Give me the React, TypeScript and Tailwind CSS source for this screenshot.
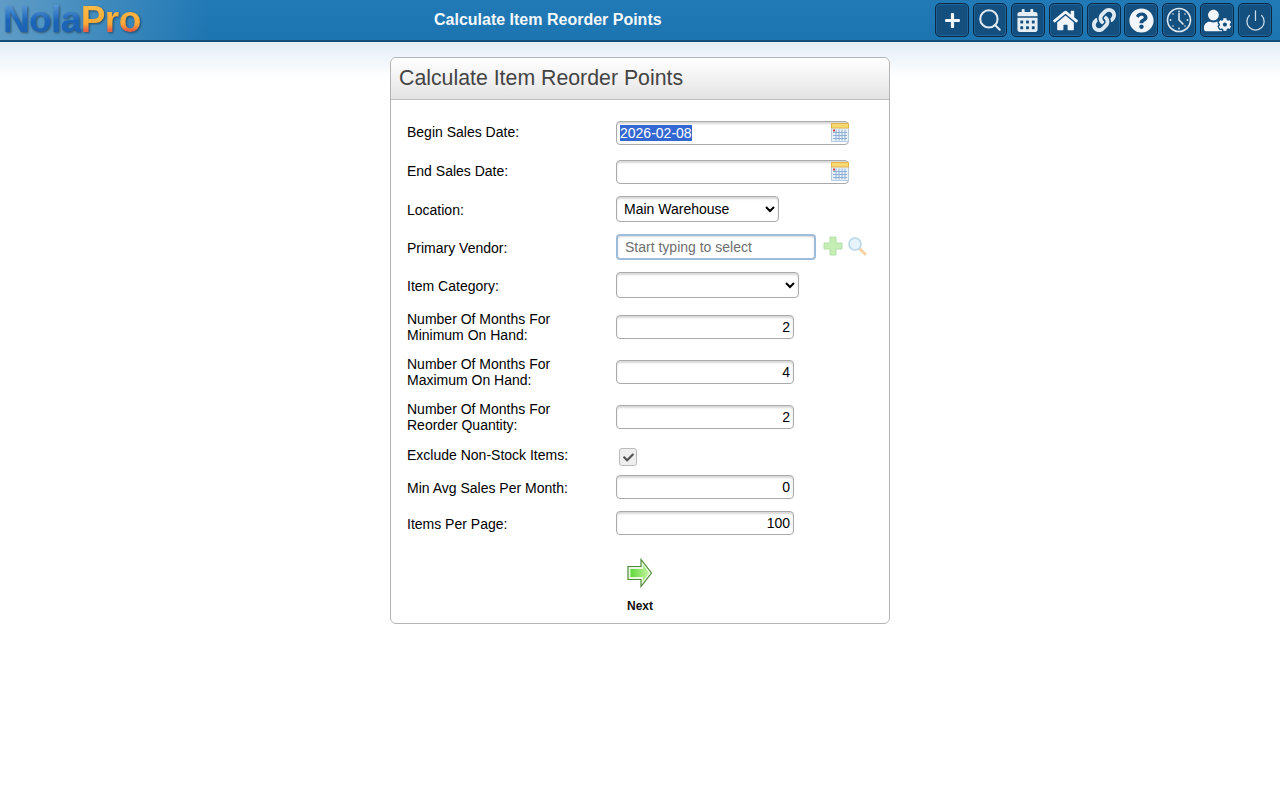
import { useEffect, useRef } from "react"
import { Power, Search } from "lucide-react"
import { FaCalendarAlt, FaCheck, FaHome, FaLink, FaPlus, FaQuestionCircle, FaUserCog } from "react-icons/fa"

function ClockIcon() {
  return (
    <svg width="26" height="26" viewBox="0 0 26 26" fill="none" stroke="#dfe9f2">
      <circle cx="13" cy="13" r="11.5" strokeWidth="1.6" />
      <path d="M13 6.5V13l4 4" strokeWidth="1.6" strokeLinecap="round" />
      <g stroke="none" fill="#dfe9f2">
        <circle cx="13" cy="4.5" r="0.9" />
        <circle cx="13" cy="21.5" r="0.9" />
        <circle cx="4.5" cy="13" r="0.9" />
        <circle cx="21.5" cy="13" r="0.9" />
        <circle cx="7" cy="7" r="0.8" />
        <circle cx="19" cy="7" r="0.8" />
        <circle cx="7" cy="19" r="0.8" />
        <circle cx="19" cy="19" r="0.8" />
      </g>
    </svg>
  )
}

function CalendarPicker() {
  return (
    <svg width="18" height="19" viewBox="0 0 18 19" className="absolute right-0 top-0.5">
      <rect x="0.5" y="0.5" width="17" height="18" fill="#e8f1fa" stroke="#b9cde2" />
      <rect x="0.5" y="0.5" width="17" height="4.5" fill="#f7d774" stroke="#dfb64a" />
      <rect x="2" y="6.5" width="2" height="2" fill="#d9434f" />
      <path d="M2 9.5h14M2 12.5h14M2 15.5h14M5 6.5v11M8 6.5v11M11 6.5v11M14 6.5v11" stroke="#8fb1d6" strokeWidth="1" />
    </svg>
  )
}

function NextArrow() {
  return (
    <svg width="26" height="30" viewBox="0 0 26 30">
      <defs>
        <linearGradient id="nextFill" x1="0" y1="0" x2="1" y2="0">
          <stop offset="0" stopColor="#5fd83a" />
          <stop offset="1" stopColor="#c4f59e" />
        </linearGradient>
      </defs>
      <path d="M1 8.5h13V1.5L24.5 15 14 28.5v-7H1z" fill="#eaf9df" stroke="#4f8a3a" strokeWidth="1.2" />
      <path d="M3.5 11h12.5V7l6 8-6 8v-4H3.5z" fill="url(#nextFill)" />
    </svg>
  )
}

const navButtons = [
  <FaPlus className="text-[17px] text-[#f2f6fa]" />,
  <Search size={26} strokeWidth={1.9} className="text-[#dfe9f2]" />,
  <FaCalendarAlt className="text-[23px] text-[#e6eef5]" />,
  <FaHome className="text-[25px] text-[#f2f6fa]" />,
  <FaLink className="text-[24px] text-[#dfe9f2]" />,
  <FaQuestionCircle className="text-[25px] text-[#f2f6fa]" />,
  <ClockIcon />,
  <FaUserCog className="text-[27px] text-[#f2f6fa]" />,
  <Power size={23} strokeWidth={1.3} className="text-[#cfdde9]" />,
]

const fieldClass =
  "h-6 rounded border border-[#aaaaaa] bg-white px-[3px] text-sm text-black shadow-[inset_0_2px_2px_#d8d8d8] outline-none"

function Row({
  label,
  height,
  labelClass = "",
  children,
}: {
  label: React.ReactNode
  height: string
  labelClass?: string
  children: React.ReactNode
}) {
  return (
    <div className={`flex items-center ${height}`}>
      <div className={`w-[225px] pl-4 text-sm leading-4 text-black ${labelClass}`}>{label}</div>
      <div className="relative flex items-center">{children}</div>
    </div>
  )
}

function NumberField({ value }: { value: string }) {
  return <input readOnly value={value} className={`${fieldClass} w-[178px] text-right`} />
}

export default function App() {
  const dateRef = useRef<HTMLInputElement>(null)

  useEffect(() => {
    dateRef.current?.focus()
    dateRef.current?.select()
  }, [])

  return (
    <div className="min-h-[800px] bg-white font-['Liberation_Sans',Arial,sans-serif]">
      <header className="flex h-[42px] items-start justify-between border-b-2 border-[#124d78] bg-gradient-to-b from-[#2179b6] to-[#1c74b0]">
        <div className="h-10 w-[210px] bg-gradient-to-r from-[#5f9cc6] via-[#3f8abd] to-transparent pl-[3px]">
          <div className="flex items-start text-[37px] leading-[40px] font-bold tracking-[-0.6px] drop-shadow-[1px_1px_1px_rgba(0,0,0,0.45)]">
            <span className="bg-gradient-to-b from-[#6aa8de] via-[#1b66bb] via-50% to-[#1c5fae] bg-clip-text text-transparent">Nola</span>
            <span className="bg-gradient-to-b from-[#ffc04a] via-[#f9a838] via-60% to-[#e8623f] to-75% bg-clip-text text-transparent">Pro</span>
          </div>
        </div>
        <div className="absolute left-[434px] top-0 flex h-10 w-[228px] items-center whitespace-nowrap text-base font-bold text-[#f4f8fb]">
          Calculate Item Reorder Points
        </div>
        <nav className="flex gap-[3.875px] pt-[3px] pr-2">
          {navButtons.map((icon, i) => (
            <div
              key={i}
              className="flex h-[34px] w-[34px] items-center justify-center rounded-[5px] border border-[#0b2a45] bg-[#14507f] shadow-[inset_0_0_0_1px_#1d6396]"
            >
              {icon}
            </div>
          ))}
        </nav>
      </header>

      <div className="bg-gradient-to-b from-[#e3eef7] to-white to-[36px] pt-[15px]">
        <main className="mx-auto h-[567px] w-[500px] rounded-[6px] border border-[#b4b4b4] bg-white">
          <h1 className="flex h-[42px] items-center rounded-t-[6px] border-b border-[#bdbdbd] bg-gradient-to-b from-white to-[#e4e4e4] pl-2 text-[21.3px] font-normal text-[#444444]">
            Calculate Item Reorder Points
          </h1>
          <div className="pt-[14px]">
            <Row label="Begin Sales Date:" height="h-[38px]" labelClass="pb-0.5">
              <input
                ref={dateRef}
                readOnly
                value="2026-02-08"
                className={`${fieldClass} w-[233px] selection:bg-[#3367d1] selection:text-white`}
              />
              <CalendarPicker />
            </Row>
            <Row label="End Sales Date:" height="h-[39px]" labelClass="pb-0.5">
              <input readOnly className={`${fieldClass} w-[233px]`} />
              <CalendarPicker />
            </Row>
            <Row label="Location:" height="h-[37px]">
              <select className={`${fieldClass} -mt-0.5 h-[26px] w-[163px]`}>
                <option>Main Warehouse</option>
              </select>
            </Row>
            <Row label="Primary Vendor:" height="h-[38px]" labelClass="pt-0.5">
              <input
                readOnly
                placeholder="Start typing to select"
                className="h-[26px] w-[200px] rounded border-2 border-[#9dbcd8] bg-white px-[7px] text-sm text-black shadow-[inset_0_1px_2px_#d8d8d8] outline-none placeholder:text-[#6f6f6f]"
              />
              <svg width="20" height="20" viewBox="0 0 20 20" className="mb-0.5 ml-[7px]">
                <path d="M7 1h6v6h6v6h-6v6H7v-6H1V7h6z" fill="#c4eeb4" stroke="#b5e0a8" />
              </svg>
              <svg width="20" height="20" viewBox="0 0 20 20" className="mb-0.5 ml-[4px]">
                <path d="M12 12l6 6" stroke="#f5d3a6" strokeWidth="3" strokeLinecap="round" />
                <circle cx="8" cy="8" r="6" fill="#e6f3fb" stroke="#b7d6ea" strokeWidth="1.6" />
              </svg>
            </Row>
            <Row label="Item Category:" height="h-[38px]" labelClass="pt-0.5">
              <select className={`${fieldClass} h-[26px] w-[183px]`}>
                <option></option>
              </select>
            </Row>
            <Row label={<>Number Of Months For<br />Minimum On Hand:</>} height="h-[46px]">
              <NumberField value="2" />
            </Row>
            <Row label={<>Number Of Months For<br />Maximum On Hand:</>} height="h-[44px]">
              <NumberField value="4" />
            </Row>
            <Row label={<>Number Of Months For<br />Reorder Quantity:</>} height="h-[46px]">
              <NumberField value="2" />
            </Row>
            <Row label="Exclude Non-Stock Items:" height="h-[31px]" labelClass="pb-px">
              <div className="ml-[3px] mt-[3px] flex h-[18px] w-[18px] items-center justify-center rounded-[3px] border border-[#bbbbbb] bg-[#eeeeee]">
                <FaCheck className="text-[11px] text-[#555555]" />
              </div>
            </Row>
            <Row label="Min Avg Sales Per Month:" height="h-[32px]" labelClass="pt-0.5">
              <NumberField value="0" />
            </Row>
            <Row label="Items Per Page:" height="h-[40px]" labelClass="pt-0.5">
              <NumberField value="100" />
            </Row>
          </div>
          <div className="ml-[236px] flex w-[26px] flex-col items-center pt-[15px]">
            <NextArrow />
            <div className="mt-[10px] text-xs font-bold text-[#111111]">Next</div>
          </div>
        </main>
      </div>
    </div>
  )
}
